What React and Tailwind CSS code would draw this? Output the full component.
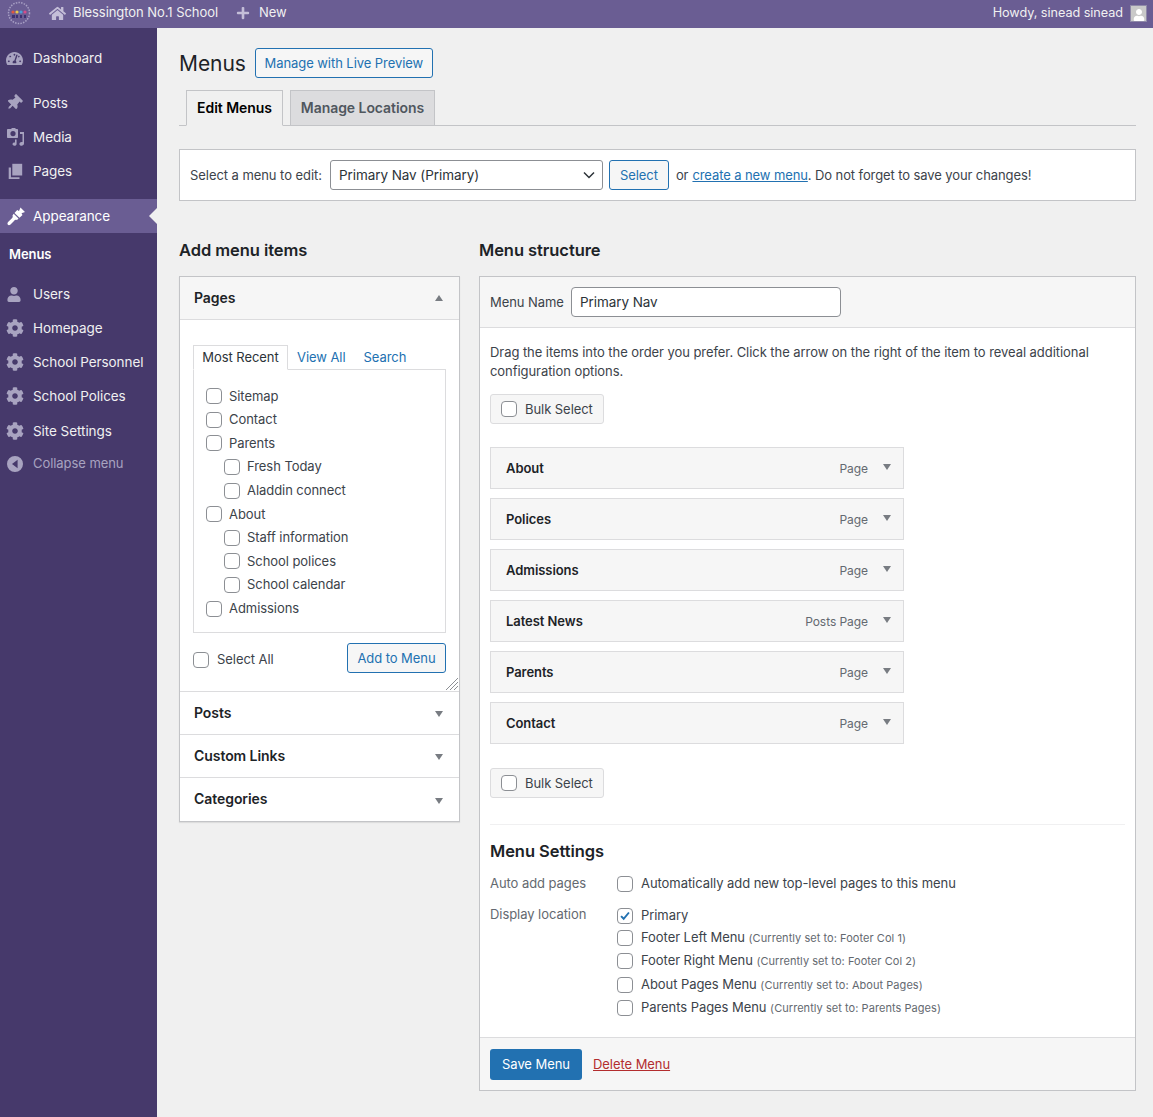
import React from 'react'
import { FaTachometerAlt, FaThumbtack, FaUser, FaCog, FaHome, FaPlus } from 'react-icons/fa'

function MediaIcon() {
  return (
    <svg viewBox="0 0 20 20" className="w-[20px] h-[20px]" fill="currentColor">
      <path d="M2 2h3l1-1h3l1 1h1c.6 0 1 .4 1 1v7c0 .6-.4 1-1 1H2c-.6 0-1-.4-1-1V3c0-.6.4-1 1-1zm5 2a2.6 2.6 0 1 0 0 5.2A2.6 2.6 0 0 0 7 4z" />
      <path d="M14 5h4v11.500c0 1.400-1.200 2.200-2.400 2.200s-2.200-.7-2.200-1.800 1-1.900 2.200-1.900c.3 0 .6 0 .9.1V7h-2.500V5z" />
      <path d="M9 12.500h1.600v4.400c0 1.100-1 1.900-2.100 1.900s-2-.7-2-1.700.9-1.700 2-1.700c.2 0 .4 0 .5.1v-3z" />
    </svg>
  )
}

function PagesIcon() {
  return (
    <svg viewBox="0 0 20 20" className="w-[18px] h-[18px]" fill="currentColor">
      <path d="M7 2h11v13H7z" />
      <path d="M3 6h2.500v11H15v2H3z" />
    </svg>
  )
}

function BrushIcon() {
  return (
    <svg viewBox="0 0 20 20" className="w-[20px] h-[20px]" fill="currentColor">
      <path d="M14.500 1.500l4.500 4.500-3.500 1.200 1 1.800-3 2.800L8.500 7l2.700-3 1.800 1z" />
      <path d="M7.700 7.800l4.800 4.800-1.500 1.500c-1.200-.5-2.200-.2-3 .8L4.500 18.500c-1 .8-2 .8-2.600.2s-.6-1.600.2-2.600L5.700 12.600c1-.8 1.300-1.800.8-3z" />
    </svg>
  )
}

function CollapseIcon() {
  return (
    <svg viewBox="0 0 16 16" className="w-[16px] h-[16px]" fill="currentColor">
      <path fillRule="evenodd" d="M8 0a8 8 0 1 1 0 16A8 8 0 0 1 8 0zm2.600 3.800L5 8l5.600 4.200V3.800z" />
    </svg>
  )
}

function Logo() {
  return (
    <svg viewBox="0 0 24 24" className="w-[24px] h-[24px]">
      <circle cx="12" cy="12" r="10.500" fill="none" stroke="#a79fc4" strokeWidth="1.500" strokeDasharray="1.500 1.200" />
      <circle cx="6" cy="11" r="1.600" fill="#e0563f" />
      <circle cx="10" cy="11" r="1.600" fill="#e9c64b" />
      <circle cx="14" cy="11" r="1.600" fill="#4a9fd8" />
      <circle cx="18" cy="11" r="1.600" fill="#d64c8a" />
      <path d="M5 14h3v3H5zM9 14h2v3H9zM13 14h2v3h-2zM17 14h2v3h-2z" fill="#3c3170" />
    </svg>
  )
}

function Caret({ up }) {
  return (
    <span className={`block w-0 h-0 border-x-[4px] border-x-transparent ${up ? 'border-b-[6px] border-b-[#787c82]' : 'border-t-[6px] border-t-[#787c82]'}`} />
  )
}

function Check({ checked }) {
  return (
    <span className="shrink-0 w-[16px] h-[16px] rounded-[4px] border border-[#8c8f94] bg-white flex items-center justify-center">
      {checked && (
        <svg viewBox="0 0 16 16" className="w-[14px] h-[14px]" fill="none" stroke="#2271b1" strokeWidth="2.200">
          <path d="M3.500 8.200l3 3 6-7.200" />
        </svg>
      )}
    </span>
  )
}

function NavItem({ icon, label, className = '', active }) {
  return (
    <div className={`relative flex items-center h-[34px] ${active ? 'bg-[#6a5d93] text-white' : 'text-[#f0f0f1]'} ${className}`}>
      <span className={`w-[33px] pl-[6px] flex items-center ${active ? 'text-white' : 'text-[#a8a3c0]'}`}>{icon}</span>
      <span className="text-[13.5px]">{label}</span>
      {active && (
        <span className="absolute right-0 top-[9px] w-0 h-0 border-y-[8px] border-y-transparent border-r-[8px] border-r-[#f0f0f0]" />
      )}
    </div>
  )
}

const pages = [
  ['Sitemap', 0],
  ['Contact', 0],
  ['Parents', 0],
  ['Fresh Today', 1],
  ['Aladdin connect', 1],
  ['About', 0],
  ['Staff information', 1],
  ['School polices', 1],
  ['School calendar', 1],
  ['Admissions', 0],
]

const menuItems = [
  ['About', 'Page'],
  ['Polices', 'Page'],
  ['Admissions', 'Page'],
  ['Latest News', 'Posts Page'],
  ['Parents', 'Page'],
  ['Contact', 'Page'],
]

const locations = [
  ['Footer Left Menu', '(Currently set to: Footer Col 1)', 'h-[23px]'],
  ['Footer Right Menu', '(Currently set to: Footer Col 2)', 'h-[23px]'],
  ['About Pages Menu', '(Currently set to: About Pages)', 'h-[25px]'],
  ['Parents Pages Menu', '(Currently set to: Parents Pages)', 'h-[21px]'],
]

function Accordion({ title, className = 'h-[43px]' }) {
  return (
    <div className={`${className} border-t border-[#dcdcde] flex items-center justify-between pl-[14px] pr-[16px]`}>
      <span className="text-[14px] font-semibold text-[#1d2327] -mt-[2px]">{title}</span>
      <span className="mt-[2px]"><Caret /></span>
    </div>
  )
}

function BulkSelect() {
  return (
    <div className="w-[114px] h-[30px] rounded-[3px] border border-[#dcdcde] bg-[#f6f6f6] flex items-center pl-[10px] gap-[8px] text-[13px] text-[#3c434a]">
      <Check />
      <span className="mt-[2px]">Bulk Select</span>
    </div>
  )
}

export default function App() {
  return (
    <div className="min-h-[1117px] flex flex-col bg-[#f0f0f0] text-[13px] tracking-[-0.06px] text-[#3c434a] font-['Inter','Liberation_Sans',sans-serif]">
      {/* Admin bar */}
      <header className="h-[28px] shrink-0 bg-[#6a5d93] text-[#f0f0f1] flex items-center pl-[7px] pr-[6px] pb-[2px] text-[13px]">
        <Logo />
        <FaHome className="ml-[18px] w-[17px] h-[17px] text-[#c4bed8]" />
        <span className="ml-[7px]">Blessington No.1 School</span>
        <FaPlus className="ml-[18px] w-[14px] h-[14px] text-[#c4bed8]" />
        <span className="ml-[9px]">New</span>
        <span className="ml-auto text-[12.7px]">Howdy, sinead sinead</span>
        <span className="ml-[7px] w-[17px] h-[17px] bg-[#c9c9c9] border border-[#8f89a8] flex items-end justify-center overflow-hidden">
          <FaUser className="w-[12px] h-[12px] text-white" />
        </span>
      </header>

      <div className="flex flex-1">
        {/* Sidebar */}
        <aside className="w-[157px] shrink-0 bg-[#46396b] pt-[13px]">
          <NavItem icon={<FaTachometerAlt className="w-[17px] h-[17px]" />} label="Dashboard" />
          <NavItem icon={<FaThumbtack className="w-[16px] h-[16px] rotate-45" />} label="Posts" className="mt-[11px]" />
          <NavItem icon={<MediaIcon />} label="Media" />
          <NavItem icon={<PagesIcon />} label="Pages" />
          <NavItem icon={<BrushIcon />} label="Appearance" className="mt-[11px]" active />
          <div className="h-[43px] flex items-center pl-[9px] text-[13px] font-semibold text-white">Menus</div>
          <NavItem icon={<FaUser className="w-[14px] h-[15px] ml-[1px]" />} label="Users" className="mt-[1px]" />
          <NavItem icon={<FaCog className="w-[18px] h-[18px]" />} label="Homepage" />
          <NavItem icon={<FaCog className="w-[18px] h-[18px]" />} label="School Personnel" />
          <NavItem icon={<FaCog className="w-[18px] h-[18px]" />} label="School Polices" />
          <NavItem icon={<FaCog className="w-[18px] h-[18px]" />} label="Site Settings" className="mt-[1px]" />
          <div className="flex items-center h-[32px] text-[#a8a3c0] text-[13px]">
            <span className="w-[33px] pl-[7px]"><CollapseIcon /></span>
            Collapse menu
          </div>
        </aside>

        {/* Main */}
        <main className="flex-1 min-w-0 pl-[22px] pr-[17px]">
          <div className="flex items-center pt-[20px] h-[50px]">
            <h1 className="text-[21px] text-[#1d2327] leading-none">Menus</h1>
            <button className="ml-[9px] h-[30px] w-[178px] pt-px rounded-[3px] border border-[#2271b1] bg-[#f6f6f6] text-[#2271b1] text-[13px]">
              Manage with Live Preview
            </button>
          </div>

          <div className="mt-[12px] h-[36px] flex items-end gap-[7px] pl-[7px] border-b border-[#c3c4c7]">
            <div className="w-[97px] h-[36px] -mb-px pb-[1px] border border-[#c3c4c7] border-b-[#f0f0f0] bg-[#f0f0f0] flex items-center justify-center text-[14px] font-semibold text-black">
              Edit Menus
            </div>
            <div className="w-[145px] h-[35px] pb-[1px] border border-[#c3c4c7] border-b-0 bg-[#dcdcde] flex items-center justify-center text-[14px] font-semibold text-[#50575e]">
              Manage Locations
            </div>
          </div>

          <div className="mt-[23px] h-[52px] bg-white border border-[#c3c4c7] flex items-center pl-[10px]">
            <span className="mt-px">Select a menu to edit:</span>
            <div className="ml-[8px] w-[273px] h-[30px] rounded-[3px] border border-[#8c8f94] bg-white flex items-center justify-between pl-[8px] pr-[7px] text-[13.5px] text-[#2c3338]">
              Primary Nav (Primary)
              <svg viewBox="0 0 12 8" className="w-[12px] h-[8px]" fill="none" stroke="#2c3338" strokeWidth="1.500"><path d="M1 1.500l5 5 5-5" /></svg>
            </div>
            <button className="ml-[6px] w-[60px] h-[30px] pt-px rounded-[3px] border border-[#2271b1] bg-[#f6f6f6] text-[#2271b1]">Select</button>
            <span className="ml-[7px] mt-px">or</span>
            <a className="ml-[4px] mt-px tracking-[-0.1px] text-[#2271b1] underline">create a new menu</a>
            <span className="mt-px tracking-[-0.1px]">. Do not forget to save your changes!</span>
          </div>

          <div className="mt-[37px] flex gap-[19px] items-start">
            {/* Left column */}
            <section className="w-[281px] shrink-0">
              <h2 className="h-[38px] text-[16.5px] leading-[24px] font-semibold text-[#1d2327]">Add menu items</h2>
              <div className="bg-white border border-[#c3c4c7] shadow-[0_1px_1px_rgba(0,0,0,0.08)]">
                <div className="h-[43px] bg-[#f6f6f6] border-b border-[#dcdcde] flex items-center justify-between pl-[14px] pr-[16px]">
                  <span className="text-[14px] font-semibold text-[#1d2327] -mt-[2px]">Pages</span>
                  <Caret up />
                </div>
                <div className="relative h-[371px] px-[13px] pt-[25px]">
                  <div className="flex items-end h-[25px] relative z-10">
                    <div className="w-[95px] h-[25px] border border-[#dcdcde] border-b-white bg-white flex items-center justify-center text-[#2c3338]">Most Recent</div>
                    <span className="ml-[9px] text-[#2271b1] h-[24px] leading-[22px]">View All</span>
                    <span className="ml-[18px] text-[#2271b1] h-[24px] leading-[22px]">Search</span>
                  </div>
                  <div className="-mt-px h-[264px] border border-[#dcdcde] pl-[12px] pt-[14.5px]">
                    {pages.map(([label, indent]) => (
                      <div key={label} className={`h-[23.600px] flex items-center gap-[7px] ${indent ? 'pl-[18px]' : ''}`}>
                        <Check />
                        {label}
                      </div>
                    ))}
                  </div>
                  <div className="mt-[10px] flex items-center justify-between">
                    <div className="flex items-center gap-[8px] mt-[3px]">
                      <Check />
                      Select All
                    </div>
                    <button className="w-[99px] h-[30px] pt-px rounded-[3px] border border-[#2271b1] bg-[#f6f6f6] text-[#2271b1]">Add to Menu</button>
                  </div>
                  <svg viewBox="0 0 14 14" className="absolute right-0 bottom-0 w-[14px] h-[14px]" stroke="#8c8f94" strokeWidth="1">
                    <path d="M1 13L13 1M5 13l8-8M9 13l4-4" />
                  </svg>
                </div>
                <Accordion title="Posts" />
                <Accordion title="Custom Links" />
                <Accordion title="Categories" className="h-[44px]" />
              </div>
            </section>

            {/* Right column */}
            <section className="flex-1 min-w-0">
              <h2 className="h-[38px] text-[16.5px] leading-[24px] font-semibold text-[#1d2327]">Menu structure</h2>
              <div className="bg-white border border-[#c3c4c7]">
                <div className="h-[51px] bg-[#f6f6f6] border-b border-[#dcdcde] flex items-center pl-[10px]">
                  <span className="mt-[2px]">Menu Name</span>
                  <div className="ml-[7px] w-[270px] h-[30px] rounded-[4px] border border-[#8c8f94] bg-white flex items-center pl-[8px] text-[13.5px] text-[#2c3338]">Primary Nav</div>
                </div>

                <div className="px-[10px] pt-[15px]">
                  <p className="leading-[19px] text-[#3c434a]">
                    Drag the items into the order you prefer. Click the arrow on the right of the item to reveal additional configuration options.
                  </p>
                  <div className="mt-[13px]"><BulkSelect /></div>

                  <div className="mt-[23px] w-[414px] flex flex-col gap-[9px]">
                    {menuItems.map(([title, type]) => (
                      <div key={title} className="h-[42px] bg-[#f6f6f6] border border-[#dcdcde] flex items-center pl-[15px] pr-[12px]">
                        <span className="font-semibold text-[#1d2327] mt-[2px]">{title}</span>
                        <span className="ml-auto text-[12px] text-[#646970] mt-[2px]">{type}</span>
                        <span className="ml-[15px] -mt-[3px]"><Caret /></span>
                      </div>
                    ))}
                  </div>

                  <div className="mt-[24px]"><BulkSelect /></div>

                  <div className="mt-[26px] border-t border-[#f0f0f1] pt-[14px]">
                    <h3 className="h-[24px] text-[16.5px] leading-[24px] font-semibold text-[#1d2327]">Menu Settings</h3>
                    <div className="mt-[11px] flex items-center h-[20px]">
                      <span className="w-[127px] text-[#646970]">Auto add pages</span>
                      <Check />
                      <span className="ml-[8px]">Automatically add new top-level pages to this menu</span>
                    </div>
                    <div className="mt-[10px] flex items-start">
                      <span className="w-[127px] text-[#646970] leading-[20px]">Display location</span>
                      <div className="flex-1">
                        <div className="h-[22px] pt-[2px] flex items-center gap-[8px]"><Check checked />Primary</div>
                        {locations.map(([name, note, h]) => (
                          <div key={name} className={`${h} flex items-center gap-[8px]`}>
                            <Check />
                            <span>{name} <span className="text-[11px] tracking-[0.05px] text-[#646970]">{note}</span></span>
                          </div>
                        ))}
                      </div>
                    </div>
                  </div>
                </div>

                <div className="mt-[19px] h-[53px] bg-[#f6f6f6] border-t border-[#dcdcde] flex items-center pl-[10px]">
                  <button className="w-[92px] h-[31px] pt-px rounded-[3px] bg-[#2271b1] text-white">Save Menu</button>
                  <a className="ml-[11px] mt-[2px] text-[#b32d2e] underline">Delete Menu</a>
                </div>
              </div>
            </section>
          </div>
        </main>
      </div>
    </div>
  )
}
